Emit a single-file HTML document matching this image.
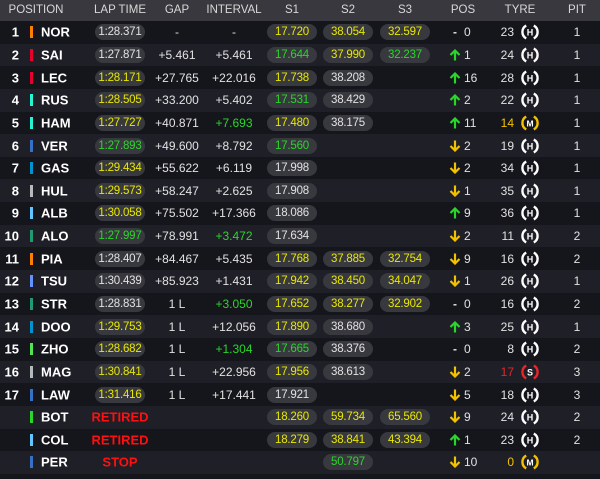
<!DOCTYPE html>
<html><head><meta charset="utf-8"><style>
*{margin:0;padding:0;box-sizing:border-box}
body{width:600px;height:479px;background:#15151c;font-family:"Liberation Sans",sans-serif;color:#e2e2e2;overflow:hidden;font-size:12px}
.hd{height:21px;background:#38383e;position:relative;color:#d8d8d8;font-size:11.5px}
.hd span{position:absolute;top:4px;transform:translateX(-50%)}
.r{height:22.65px;position:relative}
.r:nth-child(even){background:#1f1f27}
.r:nth-child(odd){background:#15151c}
.r span,.r svg{position:absolute;top:50%;transform:translate(-50%,-50%);white-space:nowrap}
.n{left:19px!important;transform:translate(-100%,-50%)!important;font-weight:bold;font-size:13px;color:#fff}
.b{left:30px!important;width:3px;height:12px;transform:translate(0,-50%)!important}
.c{left:41px!important;transform:translate(0,-50%)!important;font-weight:bold;font-size:13px;color:#fff}
.p{background:#38383f;border-radius:8px;height:16px;line-height:16px;width:50px;text-align:center;font-size:11.5px;letter-spacing:-0.2px}
.lt{left:120px}.gp{left:177px}.iv{left:234px}.s1{left:292px}.s2{left:348px}.s3{left:405px}
.ar{left:455px;width:11px;height:12px}
.da{left:455px;font-weight:bold}
.pn{left:464px!important;transform:translate(0,-50%)!important}
.tl{left:514px!important;transform:translate(-100%,-50%)!important}
.ti{left:530px;width:18px;height:18px}
.pt{left:577px}
.y{color:#e8e800}.g{color:#2bd62b}.rd{color:#ff1010;font-weight:bold;font-size:13px}
.yo{color:#f2c200}.ro{color:#e8262a}
</style></head><body>
<svg width="0" height="0" style="position:absolute"><defs>
<g id="h"><path d="M5.2,2.6 A7.3,7.3 0 0,0 5.2,15.4 M12.8,2.6 A7.3,7.3 0 0,1 12.8,15.4" fill="none" stroke="#fff" stroke-width="2.4"/><text x="9" y="12.3" text-anchor="middle" font-family="Liberation Sans" font-weight="bold" font-size="9" fill="#fff">H</text></g>
<g id="m"><path d="M5.2,2.6 A7.3,7.3 0 0,0 5.2,15.4 M12.8,2.6 A7.3,7.3 0 0,1 12.8,15.4" fill="none" stroke="#f2c200" stroke-width="2.4"/><text x="9" y="12.3" text-anchor="middle" font-family="Liberation Sans" font-weight="bold" font-size="8.5" fill="#fff">M</text></g>
<g id="s"><path d="M5.2,2.6 A7.3,7.3 0 0,0 5.2,15.4 M12.8,2.6 A7.3,7.3 0 0,1 12.8,15.4" fill="none" stroke="#e8262a" stroke-width="2.4"/><text x="9" y="12.3" text-anchor="middle" font-family="Liberation Sans" font-weight="bold" font-size="9" fill="#fff">S</text></g>
<path id="u" d="M5.5,11.5 V1.5 M1,6 L5.5,1.5 L10,6" fill="none" stroke="#2bd62b" stroke-width="2.2"/>
<path id="d" d="M5.5,0.5 V10.5 M1,6 L5.5,10.5 L10,6" fill="none" stroke="#f2c200" stroke-width="2.2"/>
</defs></svg>
<div class="hd"><span style="left:36px">POSITION</span><span style="left:120px">LAP TIME</span><span style="left:177px">GAP</span><span style="left:234px">INTERVAL</span><span style="left:292px">S1</span><span style="left:348px">S2</span><span style="left:405px">S3</span><span style="left:463px">POS</span><span style="left:520px">TYRE</span><span style="left:577px">PIT</span></div>
<div>
<div class="r"><span class="n">1</span><span class="b" style="background:#ff8000"></span><span class="c">NOR</span><span class="p lt">1:28.371</span><span class="gp">-</span><span class="iv">-</span><span class="p s1 y">17.720</span><span class="p s2 y">38.054</span><span class="p s3 y">32.597</span><span class="da">-</span><span class="pn">0</span><span class="tl">23</span><svg class="ti"><use href="#h"/></svg><span class="pt">1</span></div>
<div class="r"><span class="n">2</span><span class="b" style="background:#e8002d"></span><span class="c">SAI</span><span class="p lt">1:27.871</span><span class="gp">+5.461</span><span class="iv">+5.461</span><span class="p s1 g">17.644</span><span class="p s2 y">37.990</span><span class="p s3 g">32.237</span><svg class="ar"><use href="#u"/></svg><span class="pn">1</span><span class="tl">24</span><svg class="ti"><use href="#h"/></svg><span class="pt">1</span></div>
<div class="r"><span class="n">3</span><span class="b" style="background:#e8002d"></span><span class="c">LEC</span><span class="p lt y">1:28.171</span><span class="gp">+27.765</span><span class="iv">+22.016</span><span class="p s1 y">17.738</span><span class="p s2">38.208</span><svg class="ar"><use href="#u"/></svg><span class="pn">16</span><span class="tl">28</span><svg class="ti"><use href="#h"/></svg><span class="pt">1</span></div>
<div class="r"><span class="n">4</span><span class="b" style="background:#27f4d2"></span><span class="c">RUS</span><span class="p lt y">1:28.505</span><span class="gp">+33.200</span><span class="iv">+5.402</span><span class="p s1 g">17.531</span><span class="p s2">38.429</span><svg class="ar"><use href="#u"/></svg><span class="pn">2</span><span class="tl">22</span><svg class="ti"><use href="#h"/></svg><span class="pt">1</span></div>
<div class="r"><span class="n">5</span><span class="b" style="background:#27f4d2"></span><span class="c">HAM</span><span class="p lt y">1:27.727</span><span class="gp">+40.871</span><span class="iv g">+7.693</span><span class="p s1 y">17.480</span><span class="p s2">38.175</span><svg class="ar"><use href="#u"/></svg><span class="pn">11</span><span class="tl yo">14</span><svg class="ti"><use href="#m"/></svg><span class="pt">1</span></div>
<div class="r"><span class="n">6</span><span class="b" style="background:#3671c6"></span><span class="c">VER</span><span class="p lt g">1:27.893</span><span class="gp">+49.600</span><span class="iv">+8.792</span><span class="p s1 g">17.560</span><svg class="ar"><use href="#d"/></svg><span class="pn">2</span><span class="tl">19</span><svg class="ti"><use href="#h"/></svg><span class="pt">1</span></div>
<div class="r"><span class="n">7</span><span class="b" style="background:#0093cc"></span><span class="c">GAS</span><span class="p lt y">1:29.434</span><span class="gp">+55.622</span><span class="iv">+6.119</span><span class="p s1">17.998</span><svg class="ar"><use href="#d"/></svg><span class="pn">2</span><span class="tl">34</span><svg class="ti"><use href="#h"/></svg><span class="pt">1</span></div>
<div class="r"><span class="n">8</span><span class="b" style="background:#b6babd"></span><span class="c">HUL</span><span class="p lt y">1:29.573</span><span class="gp">+58.247</span><span class="iv">+2.625</span><span class="p s1">17.908</span><svg class="ar"><use href="#d"/></svg><span class="pn">1</span><span class="tl">35</span><svg class="ti"><use href="#h"/></svg><span class="pt">1</span></div>
<div class="r"><span class="n">9</span><span class="b" style="background:#64c4ff"></span><span class="c">ALB</span><span class="p lt y">1:30.058</span><span class="gp">+75.502</span><span class="iv">+17.366</span><span class="p s1">18.086</span><svg class="ar"><use href="#u"/></svg><span class="pn">9</span><span class="tl">36</span><svg class="ti"><use href="#h"/></svg><span class="pt">1</span></div>
<div class="r"><span class="n">10</span><span class="b" style="background:#229971"></span><span class="c">ALO</span><span class="p lt g">1:27.997</span><span class="gp">+78.991</span><span class="iv g">+3.472</span><span class="p s1">17.634</span><svg class="ar"><use href="#d"/></svg><span class="pn">2</span><span class="tl">11</span><svg class="ti"><use href="#h"/></svg><span class="pt">2</span></div>
<div class="r"><span class="n">11</span><span class="b" style="background:#ff8000"></span><span class="c">PIA</span><span class="p lt">1:28.407</span><span class="gp">+84.467</span><span class="iv">+5.435</span><span class="p s1 y">17.768</span><span class="p s2 y">37.885</span><span class="p s3 y">32.754</span><svg class="ar"><use href="#d"/></svg><span class="pn">9</span><span class="tl">16</span><svg class="ti"><use href="#h"/></svg><span class="pt">2</span></div>
<div class="r"><span class="n">12</span><span class="b" style="background:#6692ff"></span><span class="c">TSU</span><span class="p lt">1:30.439</span><span class="gp">+85.923</span><span class="iv">+1.431</span><span class="p s1 y">17.942</span><span class="p s2 y">38.450</span><span class="p s3 y">34.047</span><svg class="ar"><use href="#d"/></svg><span class="pn">1</span><span class="tl">26</span><svg class="ti"><use href="#h"/></svg><span class="pt">1</span></div>
<div class="r"><span class="n">13</span><span class="b" style="background:#229971"></span><span class="c">STR</span><span class="p lt">1:28.831</span><span class="gp">1 L</span><span class="iv g">+3.050</span><span class="p s1 y">17.652</span><span class="p s2 y">38.277</span><span class="p s3 y">32.902</span><span class="da">-</span><span class="pn">0</span><span class="tl">16</span><svg class="ti"><use href="#h"/></svg><span class="pt">2</span></div>
<div class="r"><span class="n">14</span><span class="b" style="background:#0093cc"></span><span class="c">DOO</span><span class="p lt y">1:29.753</span><span class="gp">1 L</span><span class="iv">+12.056</span><span class="p s1 y">17.890</span><span class="p s2">38.680</span><svg class="ar"><use href="#u"/></svg><span class="pn">3</span><span class="tl">25</span><svg class="ti"><use href="#h"/></svg><span class="pt">1</span></div>
<div class="r"><span class="n">15</span><span class="b" style="background:#52e252"></span><span class="c">ZHO</span><span class="p lt y">1:28.682</span><span class="gp">1 L</span><span class="iv g">+1.304</span><span class="p s1 g">17.665</span><span class="p s2">38.376</span><span class="da">-</span><span class="pn">0</span><span class="tl">8</span><svg class="ti"><use href="#h"/></svg><span class="pt">2</span></div>
<div class="r"><span class="n">16</span><span class="b" style="background:#b6babd"></span><span class="c">MAG</span><span class="p lt y">1:30.841</span><span class="gp">1 L</span><span class="iv">+22.956</span><span class="p s1 y">17.956</span><span class="p s2">38.613</span><svg class="ar"><use href="#d"/></svg><span class="pn">2</span><span class="tl ro">17</span><svg class="ti"><use href="#s"/></svg><span class="pt">3</span></div>
<div class="r"><span class="n">17</span><span class="b" style="background:#3671c6"></span><span class="c">LAW</span><span class="p lt y">1:31.416</span><span class="gp">1 L</span><span class="iv">+17.441</span><span class="p s1">17.921</span><svg class="ar"><use href="#d"/></svg><span class="pn">5</span><span class="tl">18</span><svg class="ti"><use href="#h"/></svg><span class="pt">3</span></div>
<div class="r"><span class="b" style="background:#2bd62b"></span><span class="c">BOT</span><span class="lt rd">RETIRED</span><span class="p s1 y">18.260</span><span class="p s2 y">59.734</span><span class="p s3 y">65.560</span><svg class="ar"><use href="#d"/></svg><span class="pn">9</span><span class="tl">24</span><svg class="ti"><use href="#h"/></svg><span class="pt">2</span></div>
<div class="r"><span class="b" style="background:#64c4ff"></span><span class="c">COL</span><span class="lt rd">RETIRED</span><span class="p s1 y">18.279</span><span class="p s2 y">38.841</span><span class="p s3 y">43.394</span><svg class="ar"><use href="#u"/></svg><span class="pn">1</span><span class="tl">23</span><svg class="ti"><use href="#h"/></svg><span class="pt">2</span></div>
<div class="r"><span class="b" style="background:#3671c6"></span><span class="c">PER</span><span class="lt rd">STOP</span><span class="p s2 g">50.797</span><svg class="ar"><use href="#d"/></svg><span class="pn">10</span><span class="tl yo">0</span><svg class="ti"><use href="#m"/></svg></div>
</div>
</body></html>
